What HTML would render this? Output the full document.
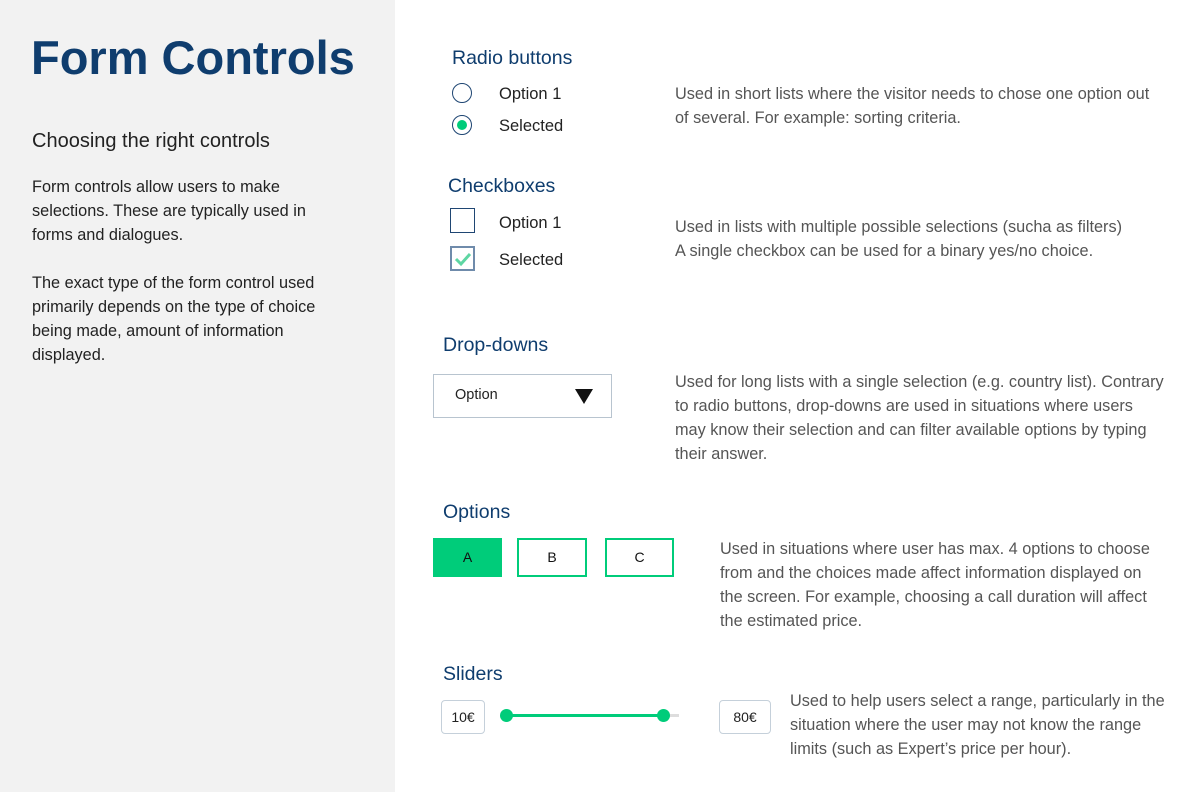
<!DOCTYPE html>
<html><head><style>
*{margin:0;padding:0;box-sizing:border-box}
body{width:1200px;height:792px;background:#fff;font-family:"Liberation Sans",sans-serif;position:relative;overflow:hidden;color:#222}
.side{position:absolute;left:0;top:0;width:395px;height:792px;background:#f2f2f2}
.a{position:absolute}
h1{position:absolute;left:31px;top:30px;font-size:47px;color:#0f3d6e;font-weight:bold;letter-spacing:0px}
.h{position:absolute;color:#0f3d6e;font-size:19.5px;top:0}
.t{position:absolute;font-size:16.3px;line-height:24px;color:#555;white-space:nowrap}
.st{position:absolute;font-size:16.3px;line-height:24px;color:#222;white-space:nowrap}
.lab{position:absolute;font-size:16.5px;color:#222}
</style></head><body>
<div class="side"></div>
<h1>Form Controls</h1>
<div class="a" style="left:32px;top:130px;font-size:20px;color:#222">Choosing the right controls</div>
<div class="st" style="left:32px;top:175px">Form controls allow users to make<br>selections. These are typically used in<br>forms and dialogues.</div>
<div class="st" style="left:32px;top:271px">The exact type of the form control used<br>primarily depends on the type of choice<br>being made, amount of information<br>displayed.</div>

<div class="h" style="left:452px;top:47px">Radio buttons</div>
<div class="a" style="left:452px;top:83px;width:20px;height:20px;border:1.5px solid #1f4673;border-radius:50%"></div>
<div class="a" style="left:452px;top:115px;width:20px;height:20px;border:1.5px solid #1f4673;border-radius:50%"><div style="position:absolute;left:3.5px;top:3.5px;width:10px;height:10px;border-radius:50%;background:#00cc7a"></div></div>
<div class="lab" style="left:499px;top:85px">Option 1</div>
<div class="lab" style="left:499px;top:117px">Selected</div>
<div class="t" style="left:675px;top:82px">Used in short lists where the visitor needs to chose one option out<br>of several. For example: sorting criteria.</div>

<div class="h" style="left:448px;top:175px">Checkboxes</div>
<div class="a" style="left:450px;top:208px;width:25px;height:25px;border:1.5px solid #1f4673"></div>
<div class="a" style="left:450px;top:246px;width:25px;height:25px;border:2px solid #6f8bab">
<svg width="22" height="22" style="position:absolute;left:0;top:0"><path d="M4 11 L9 16 L18 6" stroke="#5ed6a3" stroke-width="3" fill="none"/></svg></div>
<div class="lab" style="left:499px;top:214px">Option 1</div>
<div class="lab" style="left:499px;top:251px">Selected</div>
<div class="t" style="left:675px;top:215px">Used in lists with multiple possible selections (sucha as filters)<br>A single checkbox can be used for a binary yes/no choice.</div>

<div class="h" style="left:443px;top:334px">Drop-downs</div>
<div class="a" style="left:433px;top:374px;width:179px;height:44px;border:1px solid #b8c4cf"></div>
<div class="a" style="left:455px;top:387px;font-size:14.5px;color:#222">Option</div>
<div class="a" style="left:575px;top:389px;width:0;height:0;border-left:9px solid transparent;border-right:9px solid transparent;border-top:15px solid #111"></div>
<div class="t" style="left:675px;top:370px">Used for long lists with a single selection (e.g. country list). Contrary<br>to radio buttons, drop-downs are used in situations where users<br>may know their selection and can filter available options by typing<br>their answer.</div>

<div class="h" style="left:443px;top:501px">Options</div>
<div class="a" style="left:433px;top:538px;width:69px;height:39px;background:#00cc7a;text-align:center;line-height:39px;font-size:14px;color:#111">A</div>
<div class="a" style="left:517px;top:538px;width:70px;height:39px;border:2px solid #00cc7a;text-align:center;line-height:35px;font-size:14px;color:#111">B</div>
<div class="a" style="left:605px;top:538px;width:69px;height:39px;border:2px solid #00cc7a;text-align:center;line-height:35px;font-size:14px;color:#111">C</div>
<div class="t" style="left:720px;top:537px">Used in situations where user has max. 4 options to choose<br>from and the choices made affect information displayed on<br>the screen. For example, choosing a call duration will affect<br>the estimated price.</div>

<div class="h" style="left:443px;top:663px">Sliders</div>
<div class="a" style="left:441px;top:700px;width:44px;height:34px;border:1px solid #c5d0da;border-radius:4px;text-align:center;line-height:32px;font-size:14px;color:#222">10€</div>
<div class="a" style="left:719px;top:700px;width:52px;height:34px;border:1px solid #c5d0da;border-radius:4px;text-align:center;line-height:32px;font-size:14px;color:#222">80€</div>
<div class="a" style="left:506px;top:714px;width:173px;height:3px;background:#ddd"></div>
<div class="a" style="left:506px;top:714px;width:157px;height:3px;background:#00cc7a"></div>
<div class="a" style="left:500px;top:709px;width:13px;height:13px;border-radius:50%;background:#00cc7a"></div>
<div class="a" style="left:657px;top:709px;width:13px;height:13px;border-radius:50%;background:#00cc7a"></div>
<div class="t" style="left:790px;top:689px">Used to help users select a range, particularly in the<br>situation where the user may not know the range<br>limits (such as Expert’s price per hour).</div>
</body></html>
